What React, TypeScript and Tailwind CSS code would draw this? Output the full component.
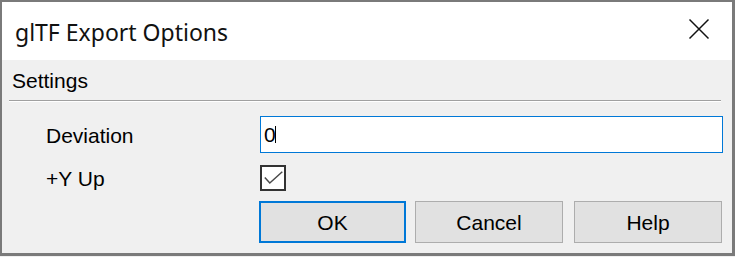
import { useState } from 'react';

export default function App() {
  const [deviation, setDeviation] = useState('0');
  const [yUp, setYUp] = useState(true);

  return (
    <div className="w-[735px] h-[257px] bg-[#f0f0f0]">
      <div
        className="w-[735px] h-[256px] flex flex-col bg-[#f0f0f0] border-l-2 border-t-2 border-r-[3px] border-b-[3px] border-[#7a7a7a] text-black"
        style={{ fontFamily: '"Liberation Sans", Arial, sans-serif' }}
      >
        {/* title bar */}
        <div className="h-[58px] shrink-0 bg-white flex items-center justify-between pl-[13px] pr-[22px]">
          <span className="text-[23px] leading-none pt-[2px] text-[#111]" style={{ fontFamily: '"Noto Sans", sans-serif' }}>
            glTF Export Options
          </span>
          <svg width="22" height="22" viewBox="0 0 22 22" className="mt-[-4px]">
            <path d="M1.5 1.5 L20.5 20.5 M20.5 1.5 L1.5 20.5" stroke="#111" strokeWidth="1.5" fill="none" />
          </svg>
        </div>

        {/* settings header */}
        <div className="h-[40px] shrink-0 flex items-center pl-[10px] text-[21px] leading-none">Settings</div>
        <div className="ml-[7px] mr-[11px] h-px bg-[#a0a0a0]" />
        <div className="ml-[7px] mr-[11px] h-px bg-white" />

        {/* rows */}
        <div className="pl-[44px] pt-[14px] flex flex-col">
          <div className="flex items-center">
            <label className="w-[214px] text-[21px] leading-none pt-[2px]">Deviation</label>
            <div className="relative w-[463px] h-[37px] bg-white border border-[#0078d7] flex items-center pl-[3px]">
              <input
                value={deviation}
                onChange={(e) => setDeviation(e.target.value)}
                className="w-full h-full bg-transparent outline-none text-[21px] leading-none caret-black"
                style={{ fontFamily: '"Liberation Sans", Arial, sans-serif' }}
              />
              <span className="absolute left-[14px] top-[9px] w-px h-[17px] bg-black" />
            </div>
          </div>

          <div className="flex items-center mt-[12px]">
            <label className="w-[214px] text-[21px] leading-none">+Y Up</label>
            <button
              onClick={() => setYUp(!yUp)}
              className="w-[26px] h-[26px] border-2 border-[#333] bg-white flex items-center justify-center p-0"
            >
              {yUp && (
                <svg width="22" height="22" viewBox="0 0 22 22">
                  <path d="M2.8 10.5 L7.8 16 L20.3 4.8" stroke="#4a4a4a" strokeWidth="1.5" fill="none" />
                </svg>
              )}
            </button>
          </div>

          <div className="flex mt-[10px] ml-[213px]">
            <button className="w-[147px] h-[42px] bg-[#e1e1e1] border-2 border-[#0078d7] text-[21px] leading-none">OK</button>
            <button className="w-[148px] h-[42px] ml-[9px] bg-[#e1e1e1] border border-[#adadad] text-[21px] leading-none">Cancel</button>
            <button className="w-[148px] h-[42px] ml-[11px] bg-[#e1e1e1] border border-[#adadad] text-[21px] leading-none">Help</button>
          </div>
        </div>
      </div>
    </div>
  );
}
